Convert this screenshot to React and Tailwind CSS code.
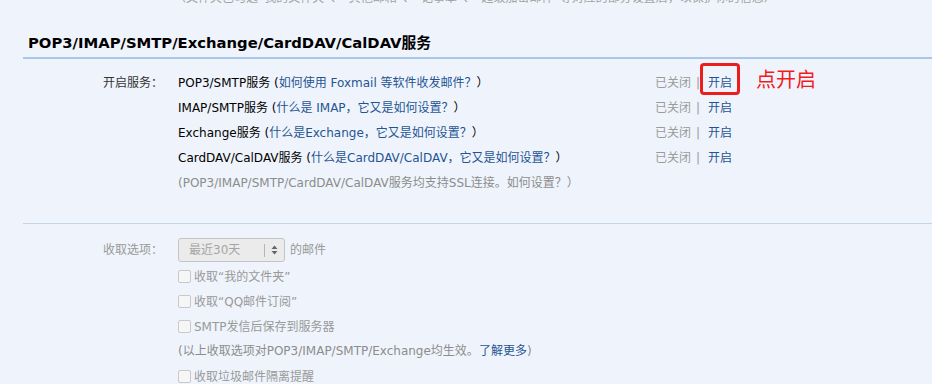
import { Fragment } from 'react';

const font = { fontFamily: '"DejaVu Sans", "Noto Sans CJK SC", sans-serif' };

const services = [
  { name: 'POP3/SMTP服务', help: '如何使用 Foxmail 等软件收发邮件？', marked: true },
  { name: 'IMAP/SMTP服务', help: '什么是 IMAP，它又是如何设置？' },
  { name: 'Exchange服务', help: '什么是Exchange，它又是如何设置？' },
  { name: 'CardDAV/CalDAV服务', help: '什么是CardDAV/CalDAV，它又是如何设置？' },
];

const options = ['收取“我的文件夹”', '收取“QQ邮件订阅”', 'SMTP发信后保存到服务器'];

const Checkbox = ({ label }) => (
  <div className="flex items-center h-[25px]">
    <span className="w-[13px] h-[13px] border border-[#c9c9c9] bg-[#f6f6f6] rounded-[2px] mr-[3px]" />
    <span>{label}</span>
  </div>
);

const App = () => {
  return (
    <div className="w-[932px] h-[384px] overflow-hidden bg-[#eff4fc] text-[12px]" style={font}>
      {/* clipped tail of the previous section */}
      <p className="-mt-[11px] leading-[18px] pl-[174px] text-[#a3a3a3] whitespace-nowrap">
        （文件夹已勾选“我的文件夹”、“其他邮箱”、“记事本”、“超级加密邮件”等对应的部分设置后，以保护你的信息）
      </p>

      <div className="ml-[23px]">
        <h2 className="mt-[24px] pl-[5px] pb-[2px] leading-[24px] text-[14.8px] font-bold text-black border-b-2 border-[#a9c6ec]">
          POP3/IMAP/SMTP/Exchange/CardDAV/CalDAV服务
        </h2>

        <div className="grid grid-cols-[140px_1fr] gap-x-[15px] mt-[12px] pb-[27px] border-b border-[#c6d3e2] leading-[25px]">
          <div className="text-right text-[#333]">开启服务：</div>
          <div className="flex flex-col">
            {services.map((s) => (
              <div key={s.name} className="flex">
                <div className="w-[477px] text-black whitespace-nowrap">
                  {s.name} (<span className="text-[#1f5593]">{s.help}</span>）
                </div>
                <span className="text-[#9a9a9a]">已关闭</span>
                <span className="ml-[5px] text-[#9a9a9a]">|</span>
                <span className="relative inline-block ml-[8px] text-[#1f5593]">
                  开启
                  {s.marked && (
                    <Fragment>
                      <span className="absolute -left-[8px] -right-[8px] -top-[8px] bottom-[1px] border-[3px] border-[#ec1d1d] rounded-[4px]" />
                      <span
                        className="absolute left-[48px] -top-[4px] leading-[24px] text-[20px] text-[#f21b1b] whitespace-nowrap"
                        style={{ fontFamily: '"Noto Sans CJK SC", sans-serif' }}
                      >
                        点开启
                      </span>
                    </Fragment>
                  )}
                </span>
              </div>
            ))}
            <div className="text-[#8c8c8c] whitespace-nowrap">
              (POP3/IMAP/SMTP/CardDAV/CalDAV服务均支持SSL连接。如何设置？）
            </div>
          </div>
        </div>

        <div className="grid grid-cols-[140px_1fr] gap-x-[15px] mt-[14px] text-[#999]">
          <div className="text-right leading-[24px]">收取选项：</div>
          <div className="flex flex-col">
            <div className="flex items-center h-[24px] mb-[2px]">
              <div className="flex items-center w-[107px] h-[24px] border border-[#c4c4c4] bg-[#ebebeb] rounded-[3px]">
                <span className="w-[85px] pl-[10px] text-[#a5a5a5]">最近30天</span>
                <span className="w-px h-[13px] bg-[#b5b5b5]" />
                <svg width="7" height="10" viewBox="0 0 7 10" className="ml-[6px]">
                  <path d="M3.5 0.5 L6.5 4 H0.5 Z" fill="#666" />
                  <path d="M3.5 9.5 L6.5 6 H0.5 Z" fill="#666" />
                </svg>
              </div>
              <span className="ml-[5px]">的邮件</span>
            </div>
            {options.map((o) => (
              <Checkbox key={o} label={o} />
            ))}
            <div className="leading-[25px] text-[#8c8c8c] whitespace-nowrap">
              (以上收取选项对POP3/IMAP/SMTP/Exchange均生效。<span className="text-[#1f5593]">了解更多</span>)
            </div>
            <Checkbox label="收取垃圾邮件隔离提醒" />
          </div>
        </div>
      </div>
    </div>
  );
};

export default App;
